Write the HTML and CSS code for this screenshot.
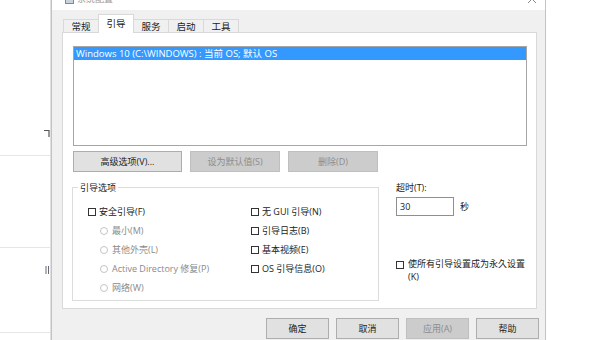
FILE: index.html
```html
<!DOCTYPE html>
<html lang="zh-CN">
<head>
<meta charset="utf-8">
<title>系统配置</title>
<link rel="stylesheet" href="styles.css">
</head>
<body>
<div class="screen">
  <div class="backdrop">
    <div class="bd-row bd-row-1">
      <svg class="bd-mark" width="6" height="8" viewBox="0 0 6 8"><path d="M0 1.5H5V8" fill="none" stroke="#555" stroke-width="1.2"/></svg>
    </div>
    <div class="bd-row bd-row-2"></div>
    <div class="bd-row bd-row-3">
      <svg class="bd-mark" width="5" height="8" viewBox="0 0 5 8"><path d="M1 0V8M3.5 0V8" fill="none" stroke="#667" stroke-width="1"/></svg>
    </div>
    <div class="bd-row bd-row-4"></div>
  </div>
  <div class="window">
    <div class="titlebar">
      <svg class="app-icon" width="9" height="12" viewBox="0 0 9 12"><rect x="0.5" y="0.5" width="8" height="11" fill="#c9d3dd" stroke="#7d8b99"/></svg>
      <span class="title">系统配置</span>
      <svg class="close" width="10" height="10" viewBox="0 0 10 10"><path d="M1 1L9 9M9 1L1 9" stroke="#8a8a8a" stroke-width="1"/></svg>
    </div>
    <div class="body">
      <div class="tabs">
        <div class="tab">常规</div>
        <div class="tab active">引导</div>
        <div class="tab">服务</div>
        <div class="tab">启动</div>
        <div class="tab">工具</div>
      </div>
      <div class="panel">
        <div class="listbox">
          <div class="list-item selected">Windows 10 (C:\WINDOWS) : 当前 OS; 默认 OS</div>
        </div>
        <div class="list-buttons">
          <div class="btn btn-wide">高级选项(V)...</div>
          <div class="btn btn-mid disabled">设为默认值(S)</div>
          <div class="btn btn-mid disabled">删除(D)</div>
        </div>
        <div class="options">
          <fieldset class="group">
            <legend class="group-label">引导选项</legend>
            <div class="group-cols">
              <div class="col col-1">
                <div class="row"><span class="check"></span>安全引导(F)</div>
                <div class="row indent dim"><span class="radio"></span>最小(M)</div>
                <div class="row indent dim"><span class="radio"></span>其他外壳(L)</div>
                <div class="row indent dim"><span class="radio"></span>Active Directory 修复(P)</div>
                <div class="row indent dim"><span class="radio"></span>网络(W)</div>
              </div>
              <div class="col col-2">
                <div class="row"><span class="check"></span>无 GUI 引导(N)</div>
                <div class="row"><span class="check"></span>引导日志(B)</div>
                <div class="row"><span class="check"></span>基本视频(E)</div>
                <div class="row"><span class="check"></span>OS 引导信息(O)</div>
              </div>
            </div>
          </fieldset>
          <div class="side">
            <div class="timeout-label">超时(T):</div>
            <div class="timeout-row">
              <div class="input">30</div>
              <span class="unit">秒</span>
            </div>
            <div class="perm">
              <span class="check perm-check"></span>
              <span class="perm-label">使所有引导设置成为永久设置(K)</span>
            </div>
          </div>
        </div>
      </div>
      <div class="footer">
        <div class="btn btn-foot">确定</div>
        <div class="btn btn-foot">取消</div>
        <div class="btn btn-foot disabled">应用(A)</div>
        <div class="btn btn-foot">帮助</div>
      </div>
    </div>
  </div>
  <div class="rightbg"></div>
</div>
</body>
</html>
```

FILE: styles.css
```css
* { box-sizing: border-box; }
html, body { margin: 0; padding: 0; }
body {
  width: 600px;
  height: 340px;
  overflow: hidden;
  background: #ffffff;
  font-family: "Open Sans", "Noto Sans CJK SC", "Microsoft YaHei", sans-serif;
  font-size: 9px;
  color: #222222;
}
.screen { display: flex; width: 600px; height: 340px; overflow: hidden; }

/* background window bits */
.backdrop {
  width: 51px;
  flex: none;
  display: flex;
  flex-direction: column;
  border-right: 1px solid #e0e0e0;
}
.bd-row { display: flex; flex-direction: column; align-items: flex-end; justify-content: flex-end; border-bottom: 1px solid #e6e6e6; }
.bd-row-1 { height: 156px; padding-bottom: 18px; }
.bd-row-2 { height: 92px; }
.bd-row-3 { height: 85px; padding-bottom: 58px; }
.bd-row-4 { flex: 1; border-bottom: none; }
.bd-mark { display: block; }

/* dialog */
.window {
  width: 495px;
  flex: none;
  height: 340px;
  display: flex;
  flex-direction: column;
  background: #f0f0f0;
  border-left: 1px solid #c3c3c3;
  border-right: 1px solid #c3c3c3;
}
.titlebar {
  height: 10px;
  flex: none;
  background: #ffffff;
  display: flex;
  align-items: flex-end;
  overflow: hidden;
  padding-left: 13px;
  padding-right: 8px;
}
.app-icon { flex: none; margin-bottom: 6px; }
.title { margin-left: 3px; margin-bottom: 5px; font-size: 9px; line-height: 12px; color: #9a9a9a; }
.close { margin-left: auto; margin-bottom: 6px; margin-right: 0; flex: none; }

.body {
  flex: 1;
  display: flex;
  flex-direction: column;
  padding: 5px 8px 0 10px;
}
.tabs {
  height: 18px;
  display: flex;
  align-items: flex-end;
  margin-left: 1px;
  margin-bottom: -1px;
}
.tab {
  width: 36px;
  height: 14px;
  margin-right: -1px;
  border: 1px solid #d9d9d9;
  border-bottom: none;
  background: #f0f0f0;
  display: flex;
  align-items: center;
  justify-content: center;
  line-height: 12px;
  font-size: 9.5px;
}
.tab.active {
  height: 19px;
  background: #ffffff;
  position: relative;
  z-index: 2;
  padding-bottom: 1px;
}
.panel {
  height: 277px;
  flex: none;
  background: #ffffff;
  border: 1px solid #d9d9d9;
  padding: 13px 9px 0 10px;
}
.listbox {
  width: 454px;
  height: 100px;
  border: 1px solid #a6a6a6;
  background: #ffffff;
}
.list-item {
  height: 13px;
  line-height: 13px;
  padding-left: 2px;
  white-space: nowrap;
  font-size: 9.5px;
}
.list-item.selected { background: #3399ff; color: #ffffff; }

.list-buttons { display: flex; gap: 8px; margin-top: 5px; }
.btn {
  height: 21px;
  background: #e1e1e1;
  border: 1px solid #adadad;
  display: flex;
  align-items: center;
  justify-content: center;
  white-space: nowrap;
  color: #222222;
}
.btn.disabled { background: #cccccc; border-color: #bfbfbf; color: #8c8c8c; }
.btn-wide { width: 109px; }
.btn-mid { width: 90px; }

.options { display: flex; margin-top: 9px; }
.group {
  width: 307px;
  height: 120px;
  margin: 0 0 0 -1px;
  border: 1px solid #dcdcdc;
  padding: 8px 0 0 15px;
}
.group-label { margin-left: -10px; padding: 0 2px; line-height: 13px; font-size: 9px; }
.group-cols { display: flex; }
.col-1 { width: 163px; }
.row { height: 19px; display: flex; align-items: center; white-space: nowrap; }
.row.indent { padding-left: 12px; }
.row.dim { color: #8a8a8a; }
.check {
  width: 8px;
  height: 8px;
  flex: none;
  border: 1px solid #333333;
  background: #ffffff;
  margin-right: 3px;
}
.radio {
  width: 8px;
  height: 8px;
  flex: none;
  border: 1px solid #c4c4c4;
  border-radius: 50%;
  background: #ffffff;
  margin-right: 4px;
}

.side { margin-left: 17px; width: 131px; }
.timeout-label { line-height: 13px; }
.timeout-row { display: flex; align-items: center; margin-top: 3px; }
.input {
  width: 58px;
  height: 19px;
  border: 1px solid #8f8f8f;
  padding-left: 3px;
  line-height: 17px;
  background: #ffffff;
}
.unit { margin-left: 6px; }
.perm { display: flex; align-items: flex-start; margin-top: 41px; }
.perm-check { margin-top: 4px; margin-right: 4px; }
.perm-label { line-height: 13px; width: 119px; }

.footer { display: flex; justify-content: flex-end; gap: 7px; margin-top: 9px; margin-right: -2px; }
.btn-foot { width: 63px; }

.rightbg { flex: 1; background: #ffffff; }
```
